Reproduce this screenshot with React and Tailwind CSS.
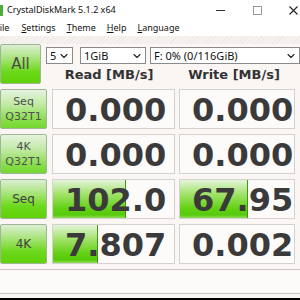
import { ChevronDown } from 'lucide-react';

const ROWS = [
  { l1: 'Seq', l2: 'Q32T1', read: '0.000', write: '0.000', rb: 0, wb: 0 },
  { l1: '4K', l2: 'Q32T1', read: '0.000', write: '0.000', rb: 0, wb: 0 },
  { l1: 'Seq', read: '102.0', write: '67.95', rb: 73, wb: 68 },
  { l1: '4K', read: '7.807', write: '0.002', rb: 45, wb: 0 },
];

function Select({ label, className }) {
  return (
    <div className={`h-[17px] flex items-center justify-between bg-white border border-[#8a8a8a] pl-[3px] pr-[2px] text-[11px] text-[#111] leading-none shrink-0 ${className}`}>
      <span className="whitespace-nowrap">{label}</span>
      <ChevronDown size={12} strokeWidth={2.2} className="text-[#222] shrink-0" />
    </div>
  );
}

function Cell({ value, bar, width }) {
  return (
    <div className={`relative h-full ${width} border border-[#d6d1cf] bg-[#fdfbfa] overflow-hidden`}>
      {bar > 0 && (
        <div
          className="absolute left-0 top-0 bottom-0 border-r border-[#3c9a10] bg-[linear-gradient(to_bottom,#e4f5da,#a6e370_35%,#62d114_75%,#58c90c_92%,#8ede5a)]"
          style={{ width: bar }}
        />
      )}
      <div className="relative h-full flex items-center pl-[12px] pt-[2px] font-['DejaVu_Sans',sans-serif] font-bold text-[32px] text-[#3a3a3a] leading-none whitespace-nowrap">
        {value}
      </div>
    </div>
  );
}

export default function App() {
  return (
    <div className="w-[300px] h-[300px] overflow-hidden bg-[#faf6f4] flex flex-col font-['Noto_Sans',sans-serif]">
      {/* title bar */}
      <div className="h-[20px] bg-white flex items-center shrink-0">
        <div className="w-[3px] h-[11px] bg-[#4cae3a] mt-[1px]" />
        <span className="ml-[4px] text-[9px] text-[#111] whitespace-nowrap">CrystalDiskMark 5.1.2 x64</span>
        <div className="flex-1" />
        <div className="w-[9px] h-px bg-[#333] mr-[28px]" />
        <div className="w-[9px] h-[9px] border border-[#999] mr-[27px]" />
        <svg width="9" height="9" viewBox="0 0 9 9" className="mr-[2px]">
          <path d="M0.5 0.5 L8.5 8.5 M8.5 0.5 L0.5 8.5" stroke="#222" strokeWidth="1.1" />
        </svg>
      </div>

      {/* menu bar */}
      <div className="h-[16px] bg-white flex items-center text-[9px] text-[#111] whitespace-nowrap shrink-0">
        <span className="ml-[-5px]"><u>F</u>ile</span>
        <span className="ml-[12px]"><u>S</u>ettings</span>
        <span className="ml-[11px]"><u>T</u>heme</span>
        <span className="ml-[11px]"><u>H</u>elp</span>
        <span className="ml-[11px]"><u>L</u>anguage</span>
      </div>
      <div className="h-[8px] shrink-0 bg-[repeating-linear-gradient(135deg,#f6f2f0_0px,#f6f2f0_2px,#efe9e7_2px,#efe9e7_3px)]" />

      {/* top controls */}
      <div className="flex h-[40px] shrink-0">
        <button className="w-[47px] h-[40px] border border-[#9fb596] rounded-[2px] bg-[linear-gradient(to_bottom,#dcefd4,#a8e47a_35%,#6cd81a_70%,#5fd20a)] font-['DejaVu_Sans',sans-serif] text-[15px] text-[#4a4a4a]">
          All
        </button>
        <div className="flex flex-col ml-[5px]">
          <div className="flex mt-[3px]">
            <Select label="5" className="w-[27px]" />
            <Select label="1GiB" className="w-[66px] ml-[7px]" />
            <Select label="F: 0% (0/116GiB)" className="w-[150px] ml-[4px]" />
          </div>
          <div className="flex mt-[4px] font-['DejaVu_Sans',sans-serif] font-bold text-[13px] text-[#333] leading-none">
            <div className="w-[123px] text-center pl-[3px]">Read [MB/s]</div>
            <div className="w-[116px] ml-[4px] text-center pl-[6px]">Write [MB/s]</div>
          </div>
        </div>
      </div>

      {/* result rows */}
      <div className="flex flex-col gap-[5px] mt-[5px]">
        {ROWS.map((r, i) => (
          <div key={i} className="flex h-[40px]">
            <button
              className={`w-[47px] h-full border border-[#9fb596] rounded-[2px] flex flex-col items-center justify-center font-['DejaVu_Sans',sans-serif] leading-[15px] ${
                r.l2
                  ? 'bg-[linear-gradient(to_bottom,#e6f3e0,#bfe9a0_40%,#86dd48_80%,#74d830)] text-[11px] text-[#505050]'
                  : 'bg-[linear-gradient(to_bottom,#dcefd4,#a8e47a_35%,#6cd81a_70%,#5fd20a)] text-[12px] text-[#404040]'
              }`}
            >
              <span>{r.l1}</span>
              {r.l2 && <span>{r.l2}</span>}
            </button>
            <div className="ml-[5px] h-full">
              <Cell value={r.read} bar={r.rb} width="w-[123px]" />
            </div>
            <div className="ml-[4px] h-full">
              <Cell value={r.write} bar={r.wb} width="w-[116px]" />
            </div>
          </div>
        ))}
      </div>

      {/* comment box */}
      <div className="mt-[5px] h-[25px] border-y border-[#c9c4c2] bg-[#fdfbfa] shrink-0" />
      <div className="flex-1" />
      <div className="h-[2px] bg-black shrink-0" />
    </div>
  );
}
